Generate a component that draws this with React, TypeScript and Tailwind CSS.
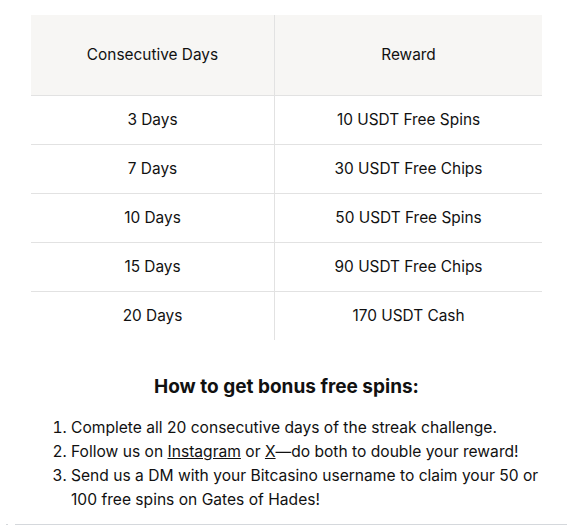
const rows = [
  ["3 Days", "10 USDT Free Spins"],
  ["7 Days", "30 USDT Free Chips"],
  ["10 Days", "50 USDT Free Spins"],
  ["15 Days", "90 USDT Free Chips"],
  ["20 Days", "170 USDT Cash"],
];

const App = () => {
  return (
    <div className="bg-white w-[567px] h-[526px] overflow-hidden text-[#111111] font-['Inter',sans-serif]">
      <div className="pt-[15px] pl-[31px] pr-[25px]">
        <div className="text-[15.4px]">
          <div className="grid grid-cols-[244px_1fr] bg-[#f7f6f4] h-[81px] border-b border-[#e2e2e2]">
            <div className="flex items-center justify-center border-r border-[#e2e2e2]">Consecutive Days</div>
            <div className="flex items-center justify-center">Reward</div>
          </div>
          {rows.map((r, i) => (
            <div
              key={i}
              className={
                i < rows.length - 1
                  ? "grid grid-cols-[244px_1fr] h-[49px] border-b border-[#e2e2e2]"
                  : "grid grid-cols-[244px_1fr] h-[48px]"
              }
            >
              <div className="flex items-center justify-center border-r border-[#e2e2e2]">{r[0]}</div>
              <div className="flex items-center justify-center">{r[1]}</div>
            </div>
          ))}
        </div>
        <h2 className="mt-[33px] text-center text-[19px] leading-[28px] font-bold">How to get bonus free spins:</h2>
        <ol className="mt-[15px] pl-[40px] list-decimal text-[15.6px] leading-[24px]">
          <li>Complete all 20 consecutive days of the streak challenge.</li>
          <li>
            Follow us on <span className="underline">Instagram</span> or <span className="underline">X</span>—do both to double your reward!
          </li>
          <li>Send us a DM with your Bitcasino username to claim your 50 or 100 free spins on Gates of Hades!</li>
        </ol>
      </div>
      <div className="mt-[12px] flex items-center">
        <div className="ml-[6px] w-[2px] h-px bg-[#d5d8dc]" />
        <div className="ml-[7px] flex-1 border-t border-[#d5d8dc]" />
      </div>
    </div>
  );
};

export default App;
